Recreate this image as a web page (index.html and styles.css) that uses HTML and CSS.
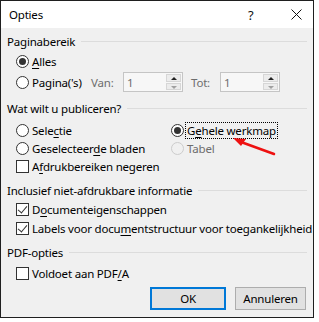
FILE: index.html
```html
<!DOCTYPE html>
<html lang="nl">
<head>
  <meta charset="UTF-8" />
  <title>Opties</title>
  <link rel="stylesheet" href="styles.css">
</head>
<body>

  <div class="dialog">
    <div class="titlebar">
      <span class="title">Opties</span>
      <span class="help">?</span>
      <span class="close">
        <svg width="11" height="11" viewBox="0 0 11 11"><path d="M0.5 0.5 L10.5 10.5 M10.5 0.5 L0.5 10.5" stroke="#111" stroke-width="1" fill="none"/></svg>
      </span>
    </div>

    <div class="content">
      <div class="group-head"><span>Paginabereik</span></div>
      <div class="row">
        <span class="radio checked"></span><span class="label"><u>A</u>lles</span>
      </div>
      <div class="row range-row">
        <span class="radio"></span><span class="label pages">Pa<u>g</u>ina('s)</span>
        <span class="dim van">Van:</span>
        <span class="spin"><span class="spin-value">1</span><span class="spin-btns"><span class="up"></span><span class="down"></span></span></span>
        <span class="dim tot">Tot:</span>
        <span class="spin"><span class="spin-value">1</span><span class="spin-btns"><span class="up"></span><span class="down"></span></span></span>
      </div>

      <div class="group-head second"><span>Wat wilt u publiceren?</span></div>
      <div class="choice-grid">
        <div class="row small"><span class="radio"></span><span class="label">Sele<u>c</u>tie</span></div>
        <div class="row small"><span class="radio checked"></span><span class="label focus">G<u>e</u>hele werkmap</span></div>
        <div class="row small"><span class="radio"></span><span class="label">Geselecteer<u>d</u>e bladen</span></div>
        <div class="row small"><span class="radio disabled"></span><span class="label disabled-text">Tabel</span></div>
        <div class="row small"><span class="check"></span><span class="label">A<u>f</u>drukbereiken negeren</span></div>
      </div>

      <div class="group-head third"><span>Inclusief niet-afdrukbare informatie</span></div>
      <div class="row mid"><span class="check checked"></span><span class="label">D<u>o</u>cumenteigenschappen</span></div>
      <div class="row mid"><span class="check checked"></span><span class="label">Labels voor docu<u>m</u>entstructuur voor toegankelijkheid</span></div>

      <div class="group-head fourth"><span>PDF-opties</span></div>
      <div class="row small pdf-row"><span class="check"></span><span class="label">Voldoet aan PDF<u>/</u>A</span></div>

      <div class="buttons">
        <button class="btn default">OK</button>
        <button class="btn">Annuleren</button>
      </div>
    </div>

    <svg class="arrow" width="60" height="30" viewBox="0 0 60 30">
      <line x1="45" y1="20" x2="12" y2="8" stroke="#ee1111" stroke-width="2.5" stroke-linecap="round"/>
      <polygon points="4,4 17,5 12,12" fill="#ee1111"/>
    </svg>
  </div>

</body>
</html>
```

FILE: styles.css
```css
body {
  margin: 0;
  background: #fff;
  font-family: 'Noto Sans', 'Segoe UI', sans-serif;
  font-size: 11.5px;
  letter-spacing: -0.2px;
  color: #000;
}

.dialog {
  position: relative;
  width: 312px;
  height: 316px;
  border: 1px solid #1f1f1f;
  background: #f0f0f0;
}

.titlebar {
  height: 27px;
  background: #fff;
  display: flex;
  align-items: center;
  padding-left: 8px;
}

.title {
  flex: 1;
}

.help {
  width: 16px;
  margin-right: 27px;
  font-size: 13px;
  color: #111;
}

.close {
  width: 22px;
  display: flex;
}

.content {
  padding: 3px 6px 0 6px;
}

.group-head {
  height: 20px;
  display: flex;
  align-items: center;
  gap: 6px;
}

.group-head::after {
  content: '';
  flex: 1;
  height: 1px;
  background: #dcdcdc;
}

.group-head.second { margin-top: 6px; }
.group-head.third { margin-top: 5px; }
.group-head.fourth { margin-top: 4px; }

.row {
  height: 20px;
  display: flex;
  align-items: center;
  padding-left: 9px;
}

.row.small { height: 18px; }
.row.mid { height: 19px; }

.range-row { margin-top: 1px; }

.label {
  margin-left: 3px;
  white-space: nowrap;
}

.label u {
  text-underline-offset: 2px;
}

.radio {
  width: 13px;
  height: 13px;
  box-sizing: border-box;
  border: 1px solid #333;
  border-radius: 50%;
  background: #fff;
  position: relative;
  flex-shrink: 0;
}

.radio.checked::after {
  content: '';
  position: absolute;
  left: 2px;
  top: 2px;
  width: 7px;
  height: 7px;
  border-radius: 50%;
  background: #333;
}

.radio.disabled {
  border-color: #cccccc;
  background: #f0f0f0;
}

.disabled-text,
.dim {
  color: #6d6d6d;
}

.check {
  width: 13px;
  height: 13px;
  box-sizing: border-box;
  border: 1px solid #333;
  background: #fff;
  position: relative;
  flex-shrink: 0;
}

.check.checked::after {
  content: '';
  position: absolute;
  left: 3px;
  top: 0px;
  width: 4px;
  height: 8px;
  border-right: 1px solid #333;
  border-bottom: 1px solid #333;
  transform: rotate(40deg);
}

.focus {
  outline: 1px dotted #000;
  outline-offset: 0;
  padding: 0 1px;
  margin-left: 2px;
}

.pages { width: 59px; }
.van { width: 32px; }
.tot { width: 29px; margin-left: 8px; }

.spin {
  width: 60px;
  height: 20px;
  box-sizing: border-box;
  border: 1px solid #c5c5c5;
  background: #f7f7f7;
  display: flex;
}

.spin-value {
  flex: 1;
  padding: 2px 0 0 3px;
  color: #6d6d6d;
  line-height: 16px;
}

.spin-btns {
  width: 15px;
  display: flex;
  flex-direction: column;
  gap: 1px;
  padding: 1px 1px 1px 0;
}

.spin-btns span {
  flex: 1;
  background: #ececec;
  border: 1px solid #d6d6d6;
  position: relative;
}

.spin-btns .up::after,
.spin-btns .down::after {
  content: '';
  position: absolute;
  left: 4px;
  border-left: 3px solid transparent;
  border-right: 3px solid transparent;
}

.spin-btns .up::after {
  top: 2px;
  border-bottom: 3px solid #222;
}

.spin-btns .down::after {
  top: 2px;
  border-top: 3px solid #a0a0a0;
}

.choice-grid {
  margin-top: 3px;
  display: grid;
  grid-template-columns: 155px 1fr;
}

.pdf-row { margin-top: 2px; }

.buttons {
  margin-top: 5px;
  display: flex;
  justify-content: flex-end;
  gap: 9px;
  padding-right: 1px;
}

.btn {
  font-family: inherit;
  font-size: 11.5px;
  letter-spacing: -0.2px;
  height: 23px;
  width: 71px;
  background: #e1e1e1;
  border: 1px solid #adadad;
  padding: 0;
  color: #000;
}

.btn.default {
  width: 76px;
  border: 2px solid #0078d7;
}

.arrow {
  position: absolute;
  left: 228px;
  top: 133px;
}
```
